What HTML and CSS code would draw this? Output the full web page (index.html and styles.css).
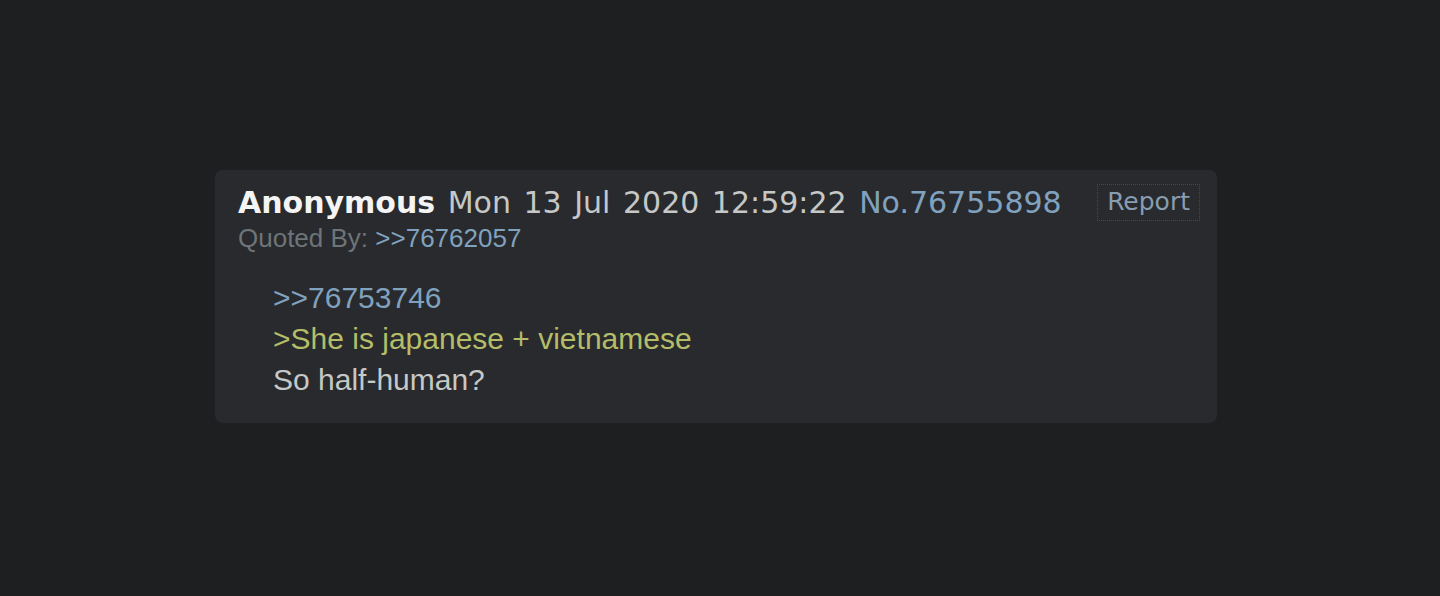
FILE: index.html
```html
<!DOCTYPE html>
<html lang="en">
  <head>
    <meta charset="UTF-8" />
    <meta name="viewport" content="width=device-width, initial-scale=1.0" />
    <title>Post No.76755898</title>
    <link rel="stylesheet" href="styles.css">
  </head>
  <body>
    <div class="post">
      <div class="post-head">
        <div class="post-info">
          <div class="info-line">
            <span class="name">Anonymous</span>
            <span class="date">Mon 13 Jul 2020 12:59:22</span>
            <a class="post-no" href="#p76755898">No.76755898</a>
          </div>
          <div class="quoted-by">
            Quoted By: <a href="#p76762057">&gt;&gt;76762057</a>
          </div>
        </div>
        <button class="report">Report</button>
      </div>

      <blockquote class="message">
        <a class="quote-link" href="#p76753746">&gt;&gt;76753746</a><br />
        <span class="greentext">&gt;She is japanese + vietnamese</span><br />
        So half-human?
      </blockquote>
    </div>
  </body>
</html>
```

FILE: styles.css
```css
body {
  margin: 0;
  padding: 170px 0 0 215px;
  background-color: #1d1f21;
  font-family: "Liberation Sans", Arial, sans-serif;
  color: #c5c8c6;
}
a {
  color: #81a2be;
  text-decoration: none;
}
.post {
  width: 1002px;
  box-sizing: border-box;
  background-color: #282a2e;
  border-radius: 8px;
  padding: 15px 17px 23px 23px;
}
.post-head {
  display: flex;
  justify-content: space-between;
  align-items: flex-start;
}
.info-line {
  font-family: "DejaVu Sans", Verdana, sans-serif;
  font-size: 30px;
  line-height: 36px;
  word-spacing: 3px;
  white-space: nowrap;
}
.name {
  color: #f4f4f4;
  font-weight: bold;
}
.date {
  color: #c5c8c6;
}
.quoted-by {
  margin-top: 2px;
  font-size: 26px;
  line-height: 31px;
  color: #6e7478;
}
.report {
  margin-top: -1px;
  font-family: "DejaVu Sans", Verdana, sans-serif;
  font-size: 25px;
  line-height: 30px;
  color: #879db0;
  background: transparent;
  border: 1px dotted #45484c;
  padding: 2px 9px 3px;
  cursor: pointer;
}
.message {
  margin: 23px 0 0 35px;
  font-size: 30px;
  line-height: 41px;
  color: #c5c8c6;
}
.greentext {
  color: #b5bd68;
}
```
